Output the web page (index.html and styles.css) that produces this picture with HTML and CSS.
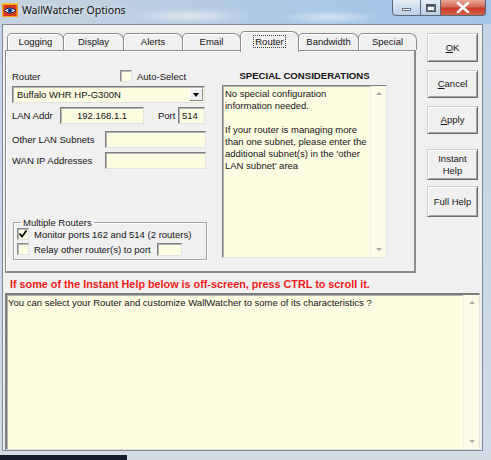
FILE: index.html
```html
<!DOCTYPE html>
<html>
<head>
<meta charset="utf-8">
<title>WallWatcher Options</title>
<link rel="stylesheet" href="styles.css">
</head>
<body>
<div class="screen">
  <div class="titlebar">
    <svg class="app-icon" width="16" height="14" viewBox="0 0 16 14">
      <rect x="0" y="0" width="16" height="14" fill="#f0a020"/>
      <rect x="1.5" y="2" width="13" height="11" fill="#d8361a"/>
      <path d="M0 0 L2 2 L4 0 L6 2 L8 0 L10 2 L12 0 L14 2 L16 0 Z" fill="#ffd040"/>
      <path d="M2 7.5 Q8 2.5 14 7.5 Q8 12.5 2 7.5 Z" fill="#f4f4ff" stroke="#10204a" stroke-width="1"/>
      <circle cx="8" cy="7.5" r="2.4" fill="#2a5cb8"/>
      <circle cx="8" cy="7.5" r="1" fill="#000"/>
    </svg>
    <span class="title">WallWatcher Options</span>
    <div class="winbtns">
      <div class="wb wb-min"><span class="dash"></span></div>
      <div class="wb wb-max"><span class="maxbox"></span></div>
      <div class="wb wb-close">
        <svg width="14" height="11" viewBox="0 0 14 11"><path d="M2 1 L12 10 M12 1 L2 10" stroke="#fff" stroke-width="2.6" stroke-linecap="round"/></svg>
      </div>
    </div>
  </div>

  <div class="client">
    <div class="top">
      <div class="tabctl">
        <div class="tabs">
          <div class="tab w56">Logging</div>
          <div class="tab w60">Display</div>
          <div class="tab w59">Alerts</div>
          <div class="tab w58">Email</div>
          <div class="tab w58 sel"><span class="focus">Router</span></div>
          <div class="tab w60">Bandwidth</div>
          <div class="tab w58">Special</div>
        </div>
        <div class="panel">
          <div class="leftcol">
            <div class="row1">
              <span class="lbl-router">Router</span>
              <span class="chk"></span>
              <span class="chk-lbl">Auto-Select</span>
            </div>
            <div class="field combo">
              <span class="combo-text">Buffalo WHR HP-G300N</span>
              <span class="combo-btn"><span class="tri-down"></span></span>
            </div>
            <div class="frow lan">
              <span class="lbl lbl-lan">LAN Addr</span>
              <span class="field in-lan">192.168.1.1</span>
              <span class="lbl lbl-port">Port</span>
              <span class="field in-port">514</span>
            </div>
            <div class="frow other">
              <span class="lbl lbl-wide">Other LAN Subnets</span>
              <span class="field in-wide"></span>
            </div>
            <div class="frow wan">
              <span class="lbl lbl-wide">WAN IP Addresses</span>
              <span class="field in-wide"></span>
            </div>
            <fieldset class="group">
              <legend>Multiple Routers</legend>
              <div class="grow">
                <span class="chk checked"><svg width="10" height="10" viewBox="0 0 10 10"><path d="M1.5 4.5 L4 7.5 L8.5 1.5" fill="none" stroke="#000" stroke-width="1.8"/></svg></span>
                <span class="chk-lbl">Monitor ports 162 and 514 (2 routers)</span>
              </div>
              <div class="grow g2">
                <span class="chk"></span>
                <span class="chk-lbl">Relay other router(s) to port</span>
                <span class="field in-relay"></span>
              </div>
            </fieldset>
          </div>
          <div class="rightcol">
            <div class="sc-head">SPECIAL CONSIDERATIONS</div>
            <div class="field memo">
              <div class="memo-text">No special configuration<br>information needed.<br><br>If your router is managing more<br>than one subnet, please enter the<br>additional subnet(s) in the 'other<br>LAN subnet' area</div>
              <div class="vscroll"><span class="tri-up"></span><span class="tri-dn"></span></div>
            </div>
          </div>
        </div>
      </div>
      <div class="btncol">
        <div class="btn b-ok"><span><u>O</u>K</span></div>
        <div class="btn b-cancel"><span><u>C</u>ancel</span></div>
        <div class="btn b-apply"><span><u>A</u>pply</span></div>
        <div class="btn b-instant"><span>Instant<br>Help</span></div>
        <div class="btn b-full"><span>Full Help</span></div>
      </div>
    </div>
    <div class="hint">If some of the Instant Help below is off-screen, press CTRL to scroll it.</div>
    <div class="field helpbox">
      <div class="help-text">You can select your Router and customize WallWatcher to some of its characteristics ?</div>
      <div class="vscroll"><span class="tri-up"></span><span class="tri-dn"></span></div>
    </div>
  </div>
  <div class="bottomstrip"><div class="taskbar"></div></div>
</div>
</body>
</html>
```
FILE: styles.css
```css
* { box-sizing: border-box; }
html, body { margin: 0; padding: 0; }
body {
  width: 491px;
  height: 460px;
  overflow: hidden;
  background: #c9d8e8;
  font-family: "Liberation Sans", Arial, sans-serif;
  font-size: 9.5px;
  color: #141414;
}
.screen {
  width: 491px;
  height: 460px;
  display: flex;
  flex-direction: column;
  background: linear-gradient(180deg, #c2d4e6 0%, #cfdcea 100%);
}

/* ---------- title bar ---------- */
.titlebar {
  height: 24px;
  flex: none;
  display: flex;
  align-items: flex-start;
  background:
    radial-gradient(ellipse 60px 8px at 190px 16px, rgba(255,255,255,0.55), rgba(255,255,255,0) 100%),
    radial-gradient(ellipse 50px 7px at 330px 17px, rgba(255,255,255,0.5), rgba(255,255,255,0) 100%),
    linear-gradient(90deg, #c6d3df 0%, #b8cde2 35%, #a9c6e6 70%, #a4c4e8 100%);
}
.app-icon { margin: 3px 0 0 2px; flex: none; }
.title {
  font-family: "Noto Sans", "Open Sans", sans-serif;
  font-size: 10.5px;
  line-height: 14px;
  margin: 3px 0 0 4px;
  color: #111;
  text-shadow: 0 0 6px rgba(255,255,255,0.9);
}
.winbtns {
  margin-left: auto;
  margin-right: 5px;
  display: flex;
  height: 17px;
  margin-top: -1px;
}
.wb {
  height: 17px;
  border: 1px solid #5a6778;
  border-left-width: 0;
  display: flex;
  align-items: center;
  justify-content: center;
}
.wb-min {
  width: 29px;
  border-left-width: 1px;
  border-radius: 0 0 0 4px;
  background: linear-gradient(180deg, #e6eef7 0%, #cddcec 50%, #bccfe4 100%);
}
.wb-max {
  width: 20px;
  background: linear-gradient(180deg, #e6eef7 0%, #cddcec 50%, #bccfe4 100%);
}
.wb-close {
  width: 45px;
  border-radius: 0 0 4px 0;
  background: linear-gradient(180deg, #e8a898 0%, #d66a56 45%, #c63c26 55%, #d8604a 100%);
}
.dash {
  width: 9px;
  height: 3px;
  margin-top: 4px;
  background: #fff;
  border: 1px solid #6a7686;
}
.maxbox {
  width: 10px;
  height: 8px;
  border: 1px solid #4a5666;
  border-top-width: 2px;
  background: #fff;
  box-shadow: inset 0 0 0 1px #6a7686;
}

/* ---------- client area ---------- */
.client {
  margin-left: 2px;
  width: 481px;
  height: 427px;
  flex: none;
  background: #f0f0f0;
  border: 1px solid #7f8a97;
  padding: 6px 0 0 2px;
  display: flex;
  flex-direction: column;
}
.top {
  display: flex;
  align-items: flex-start;
}
.tabctl { width: 411px; flex: none; }
.tabs {
  display: flex;
  align-items: flex-end;
  height: 19px;
  padding-left: 2px;
  position: relative;
  z-index: 1;
}
.tab {
  height: 17px;
  border: 1px solid #8c8c8c;
  border-bottom: none;
  border-radius: 5px 7px 0 0;
  background: #f0f0f0;
  box-shadow: inset 1px 1px 0 #ffffff;
  text-align: center;
  line-height: 15px;
  flex: none;
  margin-right: -1px;
}
.w56 { width: 57px; }
.w58 { width: 59px; }
.w59 { width: 60px; }
.w60 { width: 61px; }
.tab.sel {
  height: 21px;
  margin-bottom: -2px;
  line-height: 19px;
  padding-bottom: 2px;
}
.focus {
  outline: 1px dotted #444;
  outline-offset: 0;
  padding: 0 1px;
}
.panel {
  height: 223px;
  border: 1px solid #8c8c8c;
  border-right-width: 2px;
  border-bottom-width: 2px;
  box-shadow: inset 1px 1px 0 #ffffff;
  background: #f0f0f0;
  padding: 18px 0 0 6px;
  display: flex;
  align-items: flex-start;
}

.field {
  background: #fcfce1;
  border: 1px solid;
  border-color: #7c7c7c #e2e2e2 #e2e2e2 #7c7c7c;
  box-shadow: inset 1px 1px 0 #b4b4b4;
}

/* left column */
.leftcol {
  width: 195px;
  height: 191px;
  display: flex;
  flex-direction: column;
  flex: none;
}
.row1 {
  height: 14px;
  display: flex;
  align-items: center;
}
.lbl-router { width: 108px; }
.chk {
  width: 12px;
  height: 12px;
  flex: none;
  background: #fcfce1;
  border: 1px solid;
  border-color: #8a8a8a #e0e0e0 #e0e0e0 #8a8a8a;
  box-shadow: inset 1px 1px 0 #b8b8b8;
  display: flex;
  align-items: center;
  justify-content: center;
}
.chk-lbl { margin-left: 5px; white-space: nowrap; }
.combo {
  margin-top: 3px;
  width: 193px;
  height: 17px;
  display: flex;
  align-items: center;
  padding-left: 4px;
}
.combo-text { flex: 1; }
.combo-btn {
  width: 14px;
  height: 13px;
  margin-right: 1px;
  background: #f0f0f0;
  border: 1px solid;
  border-color: #ffffff #8a8a8a #8a8a8a #ffffff;
  display: flex;
  align-items: center;
  justify-content: center;
}
.tri-down {
  width: 0;
  height: 0;
  border-left: 3.5px solid transparent;
  border-right: 3.5px solid transparent;
  border-top: 4px solid #000;
}
.frow {
  display: flex;
  align-items: center;
  height: 17px;
}
.lan { margin-top: 4px; }
.other { margin-top: 7px; }
.wan { margin-top: 4px; }
.lbl-lan { width: 48px; }
.in-lan {
  width: 84px;
  height: 17px;
  text-align: center;
  line-height: 15px;
}
.lbl-port { margin-left: 14px; width: 20px; }
.in-port {
  width: 27px;
  height: 17px;
  line-height: 15px;
  padding-left: 3px;
}
.lbl-wide { width: 93px; }
.in-wide { width: 101px; height: 17px; }

.group {
  margin: auto 0 0 1px;
  width: 194px;
  padding: 0 3px 4px 3px;
  border: 1px solid #a0a0a0;
  box-shadow: 1px 1px 0 #ffffff, inset 1px 1px 0 #ffffff;
  min-width: 0;
}
.group legend {
  padding: 0 2px;
  margin-left: 4px;
  line-height: 11px;
}
.grow {
  display: flex;
  align-items: center;
  height: 12px;
}
.g2 { margin-top: 3px; }
.in-relay {
  width: 25px;
  height: 13px;
  margin-left: 6px;
}

/* right column */
.rightcol {
  margin-left: 15px;
  width: 165px;
  flex: none;
}
.sc-head {
  height: 14px;
  line-height: 14px;
  text-align: center;
  font-weight: bold;
  font-size: 9.6px;
  white-space: nowrap;
}
.memo {
  margin-top: 2px;
  height: 173px;
  display: flex;
}
.memo-text {
  flex: 1;
  padding: 2px 0 0 2px;
  line-height: 12px;
}
.vscroll {
  width: 16px;
  flex: none;
  border-left: 1px solid #f0f0e8;
  background: #fbfbe6;
  display: flex;
  flex-direction: column;
  justify-content: space-between;
  align-items: center;
  padding: 6px 0 6px;
}
.tri-up {
  width: 0;
  height: 0;
  border-left: 3px solid transparent;
  border-right: 3px solid transparent;
  border-bottom: 3px solid #a8a8a8;
}
.tri-dn {
  width: 0;
  height: 0;
  border-left: 3px solid transparent;
  border-right: 3px solid transparent;
  border-top: 3px solid #a8a8a8;
}

/* buttons */
.btncol {
  margin-left: 11px;
  margin-top: 2px;
  width: 51px;
  flex: none;
  display: flex;
  flex-direction: column;
}
.btn {
  background: #f0f0f0;
  border: 1px solid;
  border-color: #cfcfcf #6a6a6a #6a6a6a #cfcfcf;
  box-shadow: inset 1px 1px 0 #ffffff, inset -1px -1px 0 #a6a6a6;
  display: flex;
  align-items: center;
  justify-content: center;
  text-align: center;
  line-height: 12px;
}
.b-ok { height: 29px; }
.b-cancel { height: 28px; margin-top: 8px; }
.b-apply { height: 28px; margin-top: 8px; }
.b-instant { height: 31px; margin-top: 15px; }
.b-full { height: 31px; margin-top: 6px; }

/* hint and help */
.hint {
  margin: 5px 0 0 5px;
  height: 12px;
  line-height: 12px;
  color: #f01a1a;
  font-weight: bold;
  font-size: 10.8px;
  white-space: nowrap;
}
.helpbox {
  margin-top: 3px;
  width: 475px;
  height: 157px;
  display: flex;
  border-width: 2px 1px 1px 2px;
  border-color: #7c7c7c #e2e2e2 #e2e2e2 #7c7c7c;
}
.help-text {
  flex: 1;
  padding: 2px 0 0 1px;
  line-height: 12px;
}

/* bottom */
.bottomstrip {
  height: 9px;
  flex: none;
  background: #d4dde6;
}
.taskbar {
  margin-top: 4px;
  width: 127px;
  height: 5px;
  background: #161c2a;
}
```
